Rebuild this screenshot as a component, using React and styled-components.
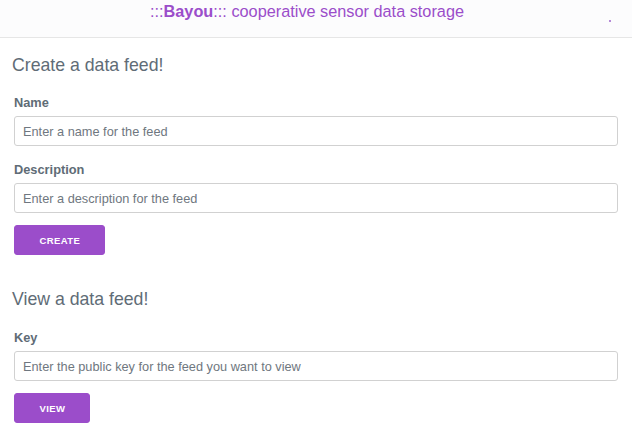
import React from "react";
import styled, { createGlobalStyle } from "styled-components";

const Global = createGlobalStyle`
body {
  margin: 0;
  background: #fff;
  font-family: "Liberation Sans", Arial, sans-serif;
  color: #606c76;
}
* { box-sizing: border-box; }
`

const Header = styled.header`
height: 38px;
background: #fcfcfd;
border-bottom: 1px solid #e6e6e6;
display: flex;
justify-content: center;
position: relative;
`
const Title = styled.div`
color: #9b4dca;
font-size: 16.3px;
line-height: 20px;
padding-top: 1px;
margin-right: 18px;
b { font-weight: 700; }
`
const Dot = styled.span`
position: absolute;
right: 21px;
top: 20px;
width: 2px;
height: 2px;
background: #b58ad8;
`
const Main = styled.main`
padding: 0 14px;
`
const Section = styled.section`
display: flex;
flex-direction: column;
`
const Heading = styled.h3`
font-size: 17.7px;
font-weight: 400;
margin: ${p => p.$top}px 0 ${p => p.$bottom}px -2px;
line-height: 20px;
color: #606c76;
`
const Label = styled.label`
font-size: 12.8px;
font-weight: 700;
line-height: 16px;
margin-bottom: 5px;
`
const Input = styled.input`
height: 30px;
border: 1px solid #d1d1d1;
border-radius: 3px;
padding: 0 8px;
font-family: inherit;
font-size: 12.75px;
color: #606c76;
margin-bottom: 16px;
&::placeholder { color: #6f7780; }
`
const Button = styled.button`
align-self: flex-start;
height: 30px;
padding: 0 24px 0 24.5px;
background: #9b4dca;
border: 1px solid #9b4dca;
border-radius: 3px;
color: #fff;
font-family: inherit;
font-size: 9.5px;
font-weight: 700;
letter-spacing: 0.4px;
text-transform: uppercase;
margin-top: -4px;
`

const App = () => {
    return (
        <>
        <Global />
        <Header>
            <Title>:::<b>Bayou</b>::: cooperative sensor data storage</Title>
            <Dot />
        </Header>
        <Main>
            <Section>
                <Heading $top={17} $bottom={20}>Create a data feed!</Heading>
                <Label>Name</Label>
                <Input placeholder="Enter a name for the feed" />
                <Label>Description</Label>
                <Input placeholder="Enter a description for the feed" />
                <Button>Create</Button>
            </Section>
            <Section>
                <Heading $top={34} $bottom={21}>View a data feed!</Heading>
                <Label>Key</Label>
                <Input placeholder="Enter the public key for the feed you want to view" />
                <Button>View</Button>
            </Section>
        </Main>
        </>
    )
}

export default App
